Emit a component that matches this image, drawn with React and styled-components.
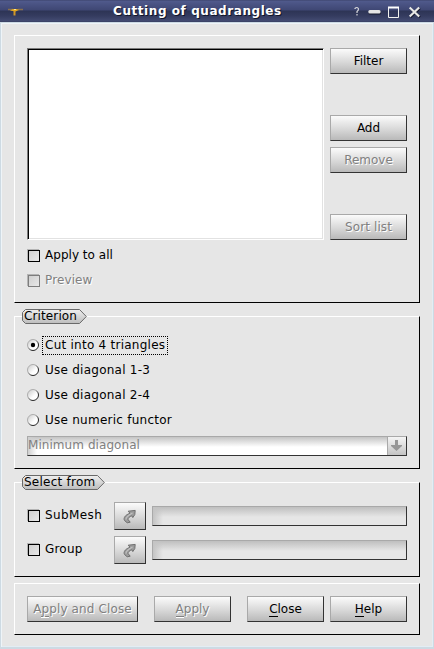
import React from "react";
import styled, { createGlobalStyle, css } from "styled-components";

const GlobalStyle = createGlobalStyle`
  * { box-sizing: border-box; }
  body { margin: 0; background: #e6e6e6; }
`;

const Window = styled.div`
  width: 434px;
  height: 649px;
  display: flex;
  flex-direction: column;
  background: #e6e6e6;
  font: 12px/16px "DejaVu Sans", sans-serif;
  color: #000;
  overflow: hidden;
`;

const TitleBar = styled.header`
  height: 22px;
  flex: none;
  display: grid;
  grid-template-columns: 113px 1fr auto;
  align-items: center;
  padding-right: 13px;
  background: linear-gradient(#3a4168 0, #505a8c 1px, #485181 5px, #3f4774 10px, #2d3455 11px, #353c60 16px, #434b72 21px, #353b5c 22px);
`;

const Title = styled.h1`
  margin: 0;
  font: bold 12px/20px "DejaVu Sans", sans-serif;
  letter-spacing: 0.57px;
  white-space: nowrap;
  color: #fff;
  text-shadow: 1px 1px 0 #101428;
`;

const AppIcon = styled.svg`
  display: block;
  margin-left: 7px;
`;

const WindowControls = styled.svg`
  display: block;
`;

const Body = styled.main`
  flex: 1;
  display: flex;
  flex-direction: column;
  padding: 12px 11px 0 12px;
  border: solid #cddae3;
  border-width: 1px 1px 2px 1px;
  box-shadow: inset 1px 1px 0 #eef4f8, inset -1px -1px 0 #e3edf4;
`;

const Panel = styled.section`
  flex: none;
  width: 406px;
  height: ${(p) => p.$height}px;
  margin: 0 0 ${(p) => p.$gap || 0}px 1px;
  padding: ${(p) => p.$pad || "12px"};
  border: 1px solid;
  border-color: #fff #000 #000 #fff;
`;

const PanelTitle = styled.h2`
  display: block;
  position: relative;
  width: ${(p) => p.$width}px;
  height: 15px;
  margin: -8px 0 ${(p) => p.$below}px -5px;
  font: 12px/15px "DejaVu Sans", sans-serif;
  white-space: nowrap;
`;

const TagShape = styled.svg`
  position: absolute;
  inset: 0;
`;

const TagText = styled.span`
  display: block;
  position: relative;
  line-height: 14px;
  padding-left: 2px;
  letter-spacing: ${(p) => p.$spacing || 0}px;
`;

const SelectionArea = styled.div`
  display: flex;
  gap: 6px;
  height: 192px;
`;

const ListBox = styled.div`
  width: 297px;
  height: 192px;
  background: #fff;
  border: 1px solid;
  border-color: #7b7b7b #fff #fff #7b7b7b;
  box-shadow: inset 1px 1px 0 #000, inset -1px -1px 0 #e2e2e2;
`;

const ButtonColumn = styled.div`
  display: flex;
  flex-direction: column;
`;

const disabledText = css`
  color: #808080;
  text-shadow: 1px 1px 0 #fff;
`;

const Button = styled.button`
  flex: none;
  width: ${(p) => p.$width || 77}px;
  height: ${(p) => p.$height || 26}px;
  margin: ${(p) => p.$margin || 0};
  padding: 0 0 1px;
  display: flex;
  align-items: center;
  justify-content: center;
  border: 1px solid;
  border-color: #a9a9a9 #333 #333 #a9a9a9;
  background: linear-gradient(#fbfbfb, #d8d8d8 55%, #b9b9b9);
  font: inherit;
  letter-spacing: ${(p) => p.$spacing || 0}px;
  color: #000;
  white-space: pre;
  ${(p) => p.disabled && disabledText}
`;

const Mnemonic = styled.span`
  border-bottom: 1px solid currentColor;
  line-height: 12px;
  display: inline-block;
  height: 14px;
  ${(p) => p.$disabled && "box-shadow: 0 1px 0 #fff;"}
`;

const Option = styled.label`
  display: flex;
  align-items: center;
  gap: 2px;
  height: ${(p) => p.$height || 25}px;
  white-space: pre;
  ${(p) => p.$disabled && disabledText}
`;

const OptionText = styled.span`
  height: 19px;
  line-height: ${(p) => p.$line || 16}px;
  padding: 0 2px;
  letter-spacing: ${(p) => p.$spacing || 0}px;
  border: 1px dotted ${(p) => (p.$focused ? "#000" : "transparent")};
`;

const Box = styled.span`
  width: 12px;
  height: 12px;
  margin: ${(p) => (p.$raised ? 0 : 1)}px 0 0 1px;
  border: 1px solid ${(p) => (p.$disabled ? "#7d7d7d" : "#000")};
  background: linear-gradient(135deg, #d0d0d0, #e8e8e8);
  box-shadow: -1px -1px 0 #b4b4b4;
`;

const Options = styled.div`
  display: flex;
  flex-direction: column;
`;

const Combo = styled.div`
  display: flex;
  width: 380px;
  height: 20px;
  margin-top: 3px;
  border: 1px solid;
  border-color: #a9a9a9 #333 #333 #a9a9a9;
`;

const ComboValue = styled.span`
  flex: 1;
  line-height: 16px;
  letter-spacing: 0.06px;
  color: #808080;
  background: linear-gradient(90deg, #cfcfcf, #fff0 9px), linear-gradient(#c4c4c4, #fff 10px);
`;

const ComboArrow = styled.span`
  width: 19px;
  padding: 0 1px 1px 0;
  display: flex;
  align-items: center;
  justify-content: center;
  border-left: 1px solid #a9a9a9;
  background: linear-gradient(#f5f5f5, #c4c4c4);
`;

const FieldRow = styled.div`
  display: grid;
  grid-template-columns: 87px 32px 261px;
  height: 28px;
  margin-bottom: 6px;
  align-items: center;
`;

const Field = styled.div`
  height: 20px;
  width: 255px;
  margin-left: 6px;
  border: 1px solid;
  border-color: #a9a9a9 #333 #333 #a9a9a9;
  background: linear-gradient(90deg, #c4c4c4, #e6e6e600 10px), linear-gradient(#bfbfbf, #e6e6e6 10px);
`;

const Actions = styled.footer`
  display: flex;
`;

function Radio({ checked }) {
  return (
    <svg width="13" height="13" viewBox="0 0 13 13">
      <defs>
        <linearGradient id="radioFill" x1="0" y1="0" x2="1" y2="1">
          <stop offset="0" stopColor="#c8c8c8" />
          <stop offset=".6" stopColor="#fff" />
        </linearGradient>
        <linearGradient id="radioRim" x1="0" y1="0" x2="1" y2="1">
          <stop offset=".35" stopColor="#adadad" />
          <stop offset=".65" stopColor="#252525" />
        </linearGradient>
      </defs>
      <circle cx="6" cy="6" r="5.5" fill="url(#radioFill)" stroke="url(#radioRim)" />
      {checked && <circle cx="6" cy="6" r="2.2" />}
    </svg>
  );
}

function PickIcon() {
  return (
    <svg width="16" height="16" viewBox="0 0 16 16">
      <path
        d="M5.2 14.8L2.6 12.6C1.4 10.8 2.4 8.2 5.2 6.6L8 5.2 6.2 3.2 13.2 2.4 12.8 6.6 10.8 9.6 10 7.8C7.5 8.6 5.8 9.8 6.1 11.6L8.2 14.2Z"
        fill="#9c9c9c"
        stroke="#707070"
        strokeWidth="1"
        strokeLinejoin="round"
      />
      <path d="M4 11.5C3.8 9 6.4 7.2 10.5 5" fill="none" stroke="#c0c0c0" strokeWidth="1.2" />
    </svg>
  );
}

function GroupTitle({ width, below, spacing, children }) {
  return (
    <PanelTitle $width={width} $below={below}>
      <TagShape width={width} height="15" viewBox={`0 0 ${width} 15`}>
        <defs>
          <linearGradient id="tagFill" x1="0" y1="0" x2="0" y2="1">
            <stop offset="0" stopColor="#efefef" />
            <stop offset="1" stopColor="#bdbdbd" />
          </linearGradient>
        </defs>
        <path
          d={`M3.5 .5H${width - 7.5}L${width - 0.7} 7.5L${width - 7.5} 14.5H3.5L.5 11.5V3.5Z`}
          fill="url(#tagFill)"
          stroke="#696969"
        />
      </TagShape>
      <TagText $spacing={spacing}>{children}</TagText>
    </PanelTitle>
  );
}

function SourceRow({ label, spacing }) {
  return (
    <FieldRow>
      <Option>
        <Box $raised />
        <OptionText $line={15} $spacing={spacing}>{label}</OptionText>
      </Option>
      <Button $width={32} $height={28} aria-label={label}>
        <PickIcon />
      </Button>
      <Field />
    </FieldRow>
  );
}

const criteria = ["Cut into 4 triangles", "Use diagonal 1-3", "Use diagonal 2-4", "Use numeric functor"];

export default function App() {
  return (
    <Window>
      <GlobalStyle />
      <TitleBar>
        <AppIcon width="17" height="16" viewBox="0 0 17 16">
          <path d="M1 6.5H6M11 6.5H16" stroke="#89704d" strokeWidth="1.6" />
          <path d="M3 7.5L6 6H10L12 7L8.5 8.5Z" fill="#e5a91f" />
          <path d="M7.5 8V12.5" stroke="#cf9628" strokeWidth="2" />
          <path d="M7 6.5H9" stroke="#ffe28a" />
        </AppIcon>
        <Title>Cutting of quadrangles</Title>
        <WindowControls width="68" height="22" viewBox="0 0 68 22">
          <path d="M2 9V8.5Q3.8 6.5 5.4 8.5Q6 10 4 11.5V13M4 14V15.5" fill="none" stroke="#d5d5da" strokeWidth="1.2" />
          <rect x="15.5" y="10.9" width="12.5" height="3.6" rx="1.5" fill="#15182c" />
          <rect x="15.3" y="10" width="12.3" height="3.5" rx="1.5" fill="#e5e5e5" />
          <path d="M35.5 7.5H45.5V17.5H35.5Z" fill="none" stroke="#f2f2ef" />
          <path d="M35 7.5H46" stroke="#fff" strokeWidth="2" />
          <path d="M57.5 8.3L67 17.3M67 8.3L57.5 17.3" stroke="#15182c" strokeWidth="2.2" />
          <path d="M56.7 7.5L66.2 16.5M66.2 7.5L56.7 16.5" stroke="#e8e8e5" strokeWidth="2.2" />
        </WindowControls>
      </TitleBar>
      <Body>
        <Panel $height={268} $gap={13}>
          <SelectionArea>
            <ListBox />
            <ButtonColumn>
              <Button>Filter</Button>
              <Button $margin="41px 0 6px">Add</Button>
              <Button disabled>Remove</Button>
              <Button disabled $margin="41px 0 0" $spacing={0.12}>Sort list</Button>
            </ButtonColumn>
          </SelectionArea>
          <Options>
            <Option $height={30}>
              <Box />
              <OptionText $line={17} $spacing={0.03}>Apply to all</OptionText>
            </Option>
            <Option $height={20} $disabled>
              <Box $disabled />
              <OptionText $line={17} $spacing={0.12}>Preview</OptionText>
            </Option>
          </Options>
        </Panel>
        <Panel $height={153} $gap={13} $pad="0 12px">
          <GroupTitle width={65} below={9} spacing={0.12}>Criterion</GroupTitle>
          <Options>
            {criteria.map((name, i) => (
              <Option key={name}>
                <Radio checked={i === 0} />
                <OptionText $focused={i === 0} $spacing={0.25}>{name}</OptionText>
              </Option>
            ))}
          </Options>
          <Combo>
            <ComboValue>Minimum diagonal</ComboValue>
            <ComboArrow>
              <svg width="11" height="11" viewBox="0 0 11 11">
                <path d="M4 0H7V5H11V6L5.5 11L0 6V5H4Z" fill="#969696" />
              </svg>
            </ComboArrow>
          </Combo>
        </Panel>
        <Panel $height={95} $gap={6} $pad="0 12px">
          <GroupTitle width={83} below={12} spacing={0.25}>Select from</GroupTitle>
          <SourceRow label="SubMesh" spacing={0.4} />
          <SourceRow label="Group" spacing={0.2} />
        </Panel>
        <Panel $height={52}>
          <Actions>
            <Button disabled $width={111} $margin="0 16px 0 0" $spacing={0.13}>
              <span>A<Mnemonic $disabled>p</Mnemonic>ply and Close</span>
            </Button>
            <Button disabled $margin="0 16px 0 0">
              <span><Mnemonic $disabled>A</Mnemonic>pply</span>
            </Button>
            <Button $margin="0 6px 0 0">
              <span><Mnemonic>C</Mnemonic>lose</span>
            </Button>
            <Button>
              <span><Mnemonic>H</Mnemonic>elp</span>
            </Button>
          </Actions>
        </Panel>
      </Body>
    </Window>
  );
}
